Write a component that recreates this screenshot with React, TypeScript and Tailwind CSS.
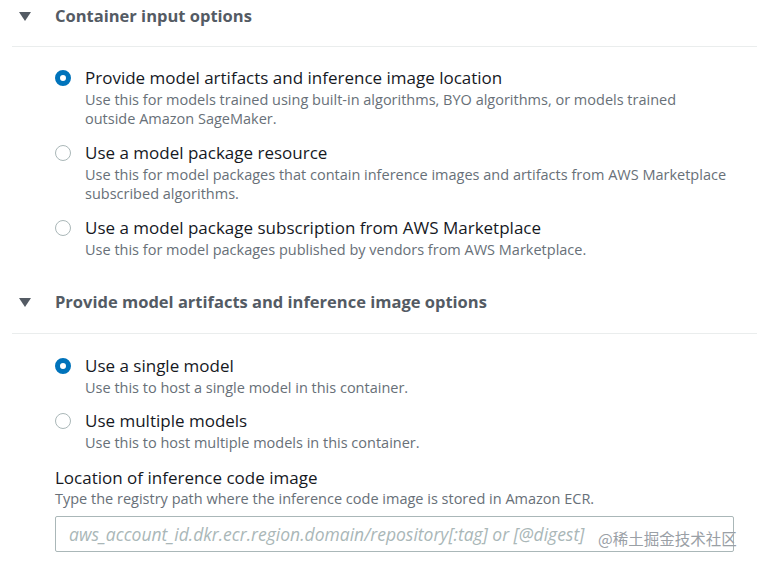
import React from 'react';

const FONT = { fontFamily: '"Open Sans", "Noto Sans", Arial, sans-serif' };

function Radio({ checked }: { checked?: boolean }) {
  return checked ? (
    <span className="mt-[3px] block h-[16px] w-[16px] shrink-0 rounded-full border-[5px] border-[#0073bb] bg-white" />
  ) : (
    <span className="mt-[3px] block h-[16px] w-[16px] shrink-0 rounded-full border-[1.5px] border-[#aab7b8] bg-white" />
  );
}

function Option({ label, desc, checked }: { label: string; desc: React.ReactNode; checked?: boolean }) {
  return (
    <div className="flex items-start gap-[14px] pl-[55px]">
      <Radio checked={checked} />
      <div>
        <div className="text-[17px] leading-[22px] text-[#16191f]">{label}</div>
        <div className="mt-[1px] text-[14.5px] leading-[19px] text-[#687078]">{desc}</div>
      </div>
    </div>
  );
}

function Heading({ text }: { text: string }) {
  return (
    <div className="flex h-[24px] items-center">
      <span className="ml-[19px] mr-[24px] block h-0 w-0 border-x-[6px] border-t-[9px] border-x-transparent border-t-[#545b64]" />
      <span className="text-[16.5px] font-bold leading-[24px] text-[#545b64]">{text}</span>
    </div>
  );
}

export default function App() {
  return (
    <div className="relative h-[563px] w-[757px] overflow-hidden bg-white" style={FONT}>
      <div className="pt-[4px]">
        <Heading text="Container input options" />
        <div className="ml-[12px] mt-[18px] h-px bg-[#eaeded]" />
        <div className="mt-[20px] flex flex-col gap-[14px]">
          <Option
            checked
            label="Provide model artifacts and inference image location"
            desc={<>Use this for models trained using built-in algorithms, BYO algorithms, or models trained<br />outside Amazon SageMaker.</>}
          />
          <Option
            label="Use a model package resource"
            desc={<>Use this for model packages that contain inference images and artifacts from AWS Marketplace<br />subscribed algorithms.</>}
          />
          <Option
            label="Use a model package subscription from AWS Marketplace"
            desc="Use this for model packages published by vendors from AWS Marketplace."
          />
        </div>
        <div className="mt-[31px]">
          <Heading text="Provide model artifacts and inference image options" />
        </div>
        <div className="ml-[12px] mt-[19px] h-px bg-[#eaeded]" />
        <div className="mt-[21px] flex flex-col gap-[13px]">
          <Option checked label="Use a single model" desc="Use this to host a single model in this container." />
          <Option label="Use multiple models" desc="Use this to host multiple models in this container." />
        </div>
        <div className="mt-[15px] pl-[55px]">
          <div className="text-[17px] leading-[22px] text-[#16191f]">Location of inference code image</div>
          <div className="text-[14.5px] leading-[19px] text-[#687078]">
            Type the registry path where the inference code image is stored in Amazon ECR.
          </div>
          <div className="mt-[8px] flex h-[36px] w-[679px] items-center rounded-[2px] border border-[#aab7b8] px-[13px]">
            <span className="text-[17.5px] italic text-[#aab7b8]">
              aws_account_id.dkr.ecr.region.domain/repository[:tag] or [@digest]
            </span>
          </div>
        </div>
      </div>
      <div
        className="absolute left-[598px] top-[528px] text-[15.5px] leading-[20px] text-[#9aa0a6]"
        style={{ fontFamily: '"Noto Sans CJK SC", sans-serif' }}
      >
        @稀土掘金技术社区
      </div>
    </div>
  );
}
